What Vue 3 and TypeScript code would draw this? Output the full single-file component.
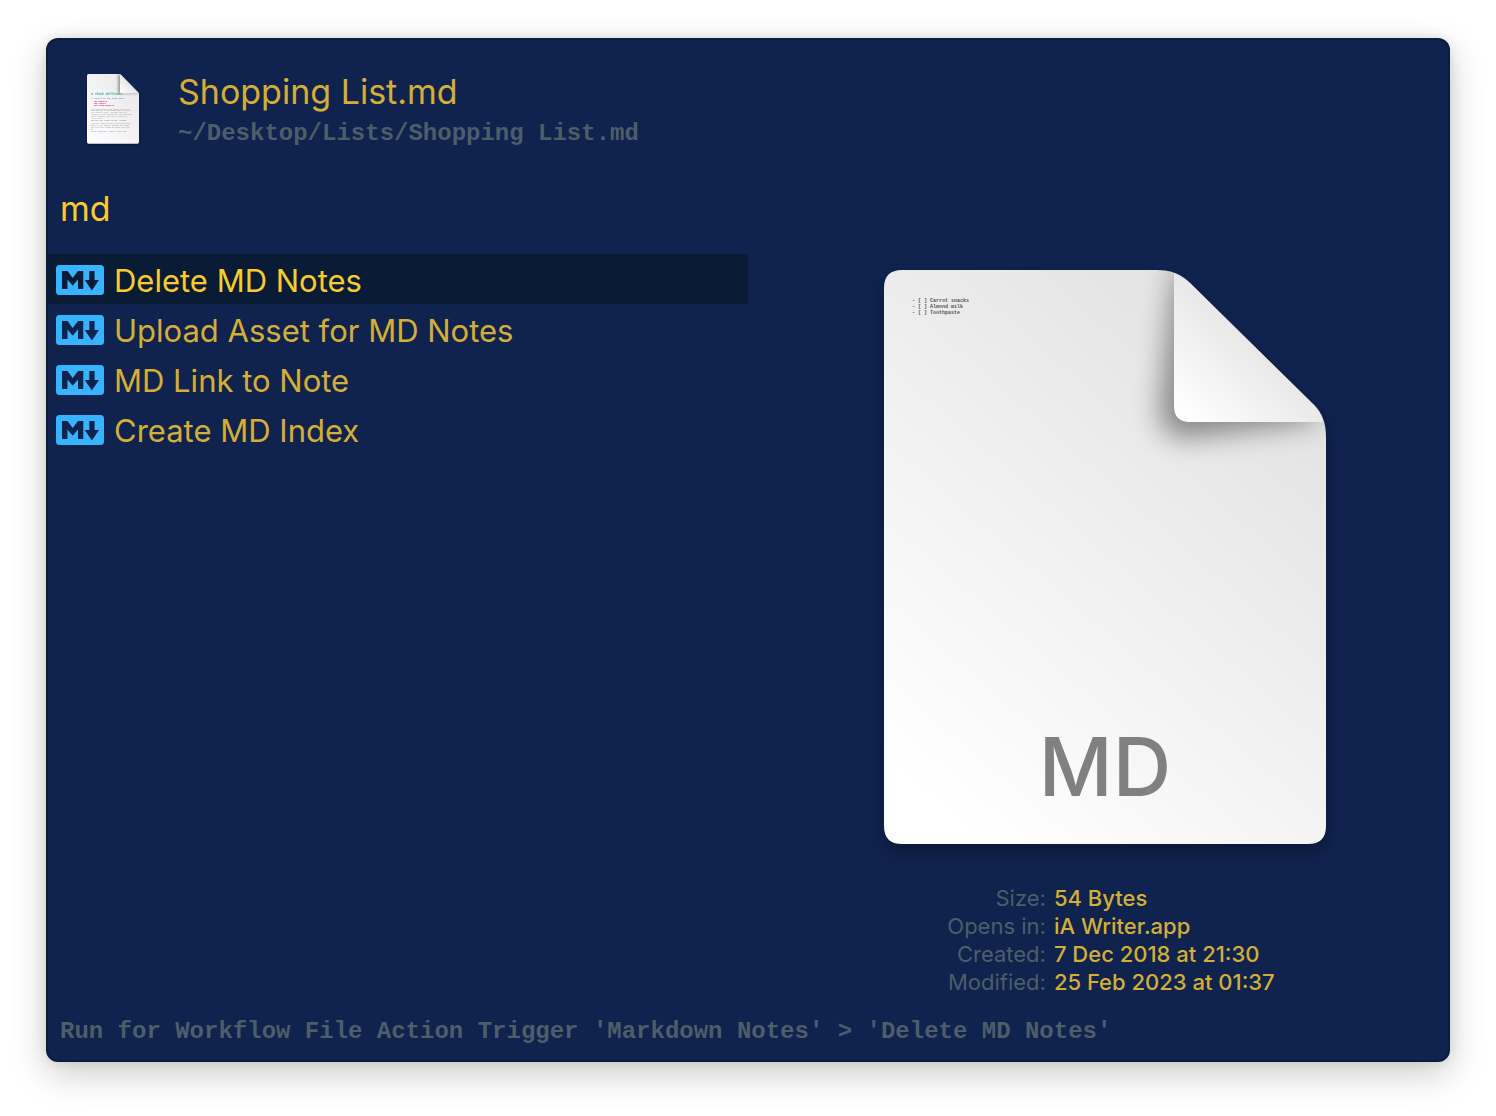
<script setup lang="ts">
import { ref } from 'vue'

interface Detail {
  label: string
  value: string
}

const query = ref('md')
const selected = ref(0)

const actions: string[] = [
  'Delete MD Notes',
  'Upload Asset for MD Notes',
  'MD Link to Note',
  'Create MD Index',
]

const details: Detail[] = [
  { label: 'Size:', value: '54 Bytes' },
  { label: 'Opens in:', value: 'iA Writer.app' },
  { label: 'Created:', value: '7 Dec 2018 at 21:30' },
  { label: 'Modified:', value: '25 Feb 2023 at 01:37' },
]
</script>

<template>
  <main class="window">
    <header class="file">
      <svg class="file-icon" viewBox="0 0 156 210" aria-hidden="true">
        <defs>
          <linearGradient id="mini-page" x1="0" y1="1" x2="1" y2="0">
            <stop offset="0" stop-color="#ffffff" />
            <stop offset="1" stop-color="#e6e6e6" />
          </linearGradient>
          <linearGradient id="mini-fold" x1="0" y1="1" x2="0.6" y2="0.4">
            <stop offset="0" stop-color="#ffffff" />
            <stop offset="1" stop-color="#e2e2e2" />
          </linearGradient>
          <filter id="mini-blur" x="-50%" y="-50%" width="200%" height="200%">
            <feGaussianBlur stdDeviation="5" />
          </filter>
          <clipPath id="mini-clip">
            <path d="M5 0H96Q100 0 103 3L153 54Q156 57 156 61V204Q156 209 151 209H5Q0 209 0 204V5Q0 0 5 0Z" />
          </clipPath>
        </defs>
        <path fill="url(#mini-page)" d="M5 0H96Q100 0 103 3L153 54Q156 57 156 61V204Q156 209 151 209H5Q0 209 0 204V5Q0 0 5 0Z" />
        <g class="mini-text">
          <text x="13" y="64" class="mini-h1"># Think different.</text>
          <text x="13" y="75" class="mini-h2">## Here's to the crazy ones.</text>
          <text x="13" y="85" class="mini-list">- The misfits</text>
          <text x="13" y="90" class="mini-list">- The rebels</text>
          <text x="13" y="95" class="mini-list">- The troublemakers</text>
          <text x="13" y="107">The round pegs in the square holes. The</text>
          <text x="13" y="112">ones who see things differently. They're</text>
          <text x="13" y="118">not fond of rules. And they have no</text>
          <text x="13" y="123">respect for the status quo. You can quote</text>
          <text x="13" y="129">them, disagree with them, glorify or</text>
          <text x="13" y="134">vilify them.</text>
          <text x="13" y="141" class="mini-quote">Because they change things. Forward.</text>
          <text x="13" y="151">And while some may see them as the crazy</text>
          <text x="13" y="156">ones, we see genius. Because the people</text>
          <text x="13" y="161">who are crazy enough to think they can</text>
          <text x="13" y="167">do.</text>
          <text x="13" y="175" class="mini-link">Think different - https://apple.com</text>
        </g>
        <g clip-path="url(#mini-clip)">
          <path d="M94 0V58H156L150 52L100 2Z" fill="#000" opacity="0.4" filter="url(#mini-blur)" />
        </g>
        <path fill="url(#mini-fold)" d="M99 1L155 58H104Q99 58 99 53Z" />
      </svg>
      <div class="file-text">
        <h1>Shopping List.md</h1>
        <p class="mono">~/Desktop/Lists/Shopping List.md</p>
      </div>
    </header>

    <input v-model="query" class="search" type="text" aria-label="Search actions" spellcheck="false" />

    <div class="content">
      <ul class="actions">
        <li v-for="(action, i) in actions" :key="action">
          <button type="button" :class="{ selected: i === selected }" @click="selected = i">
            <svg class="badge" viewBox="0 0 48 30" aria-hidden="true">
              <path
                fill="#38b4ff"
                fill-rule="evenodd"
                d="M3.500 0H44.500Q48 0 48 3.500V26.500Q48 30 44.500 30H3.500Q0 30 0 26.500V3.500Q0 0 3.500 0Z
                   M6 6V24H11.500V14.500L16.700 20.700L22 14.500V24H27.300V6H22L16.700 13L11.500 6Z
                   M33.300 6V15H28.700L35.900 25.500L43 15H38.600V6Z"
              />
            </svg>
            <span>{{ action }}</span>
          </button>
        </li>
      </ul>

      <section class="preview" aria-label="File preview">
        <svg class="page" viewBox="0 0 442 574" role="img" aria-label="MD document">
          <defs>
            <linearGradient id="page-fill" gradientUnits="userSpaceOnUse" x1="60" y1="540" x2="390" y2="160">
              <stop offset="0" stop-color="#ffffff" />
              <stop offset="0.55" stop-color="#f1f1f1" />
              <stop offset="1" stop-color="#e5e5e5" />
            </linearGradient>
            <linearGradient id="fold-fill" gradientUnits="userSpaceOnUse" x1="300" y1="148" x2="366" y2="76">
              <stop offset="0" stop-color="#ffffff" />
              <stop offset="1" stop-color="#e9e9e9" />
            </linearGradient>
            <filter id="fold-blur" x="-50%" y="-50%" width="200%" height="200%">
              <feGaussianBlur stdDeviation="14" />
            </filter>
            <clipPath id="page-clip">
              <path d="M18 0H272C288 0 297 4 306 13L430 135C438 143 442 152 442 168V556Q442 574 424 574H18Q0 574 0 556V18Q0 0 18 0Z" />
            </clipPath>
          </defs>
          <path
            class="sheet"
            fill="url(#page-fill)"
            d="M18 0H272C288 0 297 4 306 13L430 135C438 143 442 152 442 168V556Q442 574 424 574H18Q0 574 0 556V18Q0 0 18 0Z"
          />
          <g clip-path="url(#page-clip)">
            <path d="M292 -10L276 140Q276 168 302 168L440 150Z" fill="#000" opacity="0.42" filter="url(#fold-blur)" />
          </g>
          <path fill="url(#fold-fill)" d="M290 3Q298 6 306 13L430 135Q437 142 439 152H306Q290 152 290 136Z" />
          <g class="snippet">
            <text x="28" y="32">- [ ] Carrot snacks</text>
            <text x="28" y="38">- [ ] Almond milk</text>
            <text x="28" y="44">- [ ] Toothpaste</text>
          </g>
          <text class="kind" x="221" y="526" text-anchor="middle">MD</text>
        </svg>

        <dl class="details">
          <template v-for="d in details" :key="d.label">
            <dt>{{ d.label }}</dt>
            <dd>{{ d.value }}</dd>
          </template>
        </dl>
      </section>
    </div>

    <footer class="mono">Run for Workflow File Action Trigger 'Markdown Notes' &gt; 'Delete MD Notes'</footer>
  </main>
</template>

<style>
body {
  background: #ffffff;
}
</style>

<style scoped>
.window {
  box-sizing: border-box;
  display: flex;
  flex-direction: column;
  min-height: calc(100vh - 92px);
  margin: 38px 46px 54px;
  border: 2px solid #0a1d3c;
  border-radius: 12px;
  background: #10224e;
  box-shadow: 0 12px 36px rgba(0, 0, 0, 0.2), 0 0 12px rgba(0, 0, 0, 0.1);
  color: #d4af37;
  font-family: Inter, "Liberation Sans", sans-serif;
}

.mono {
  margin: 0;
  color: #4b5e69;
  font-family: "Courier New", "Liberation Mono", monospace;
  font-size: 24px;
  font-weight: 700;
  line-height: 28px;
}

.file {
  display: flex;
  gap: 39px;
  padding: 30px 39px 0;
}

.file-icon {
  width: 52px;
  height: 70px;
  margin-top: 4px;
  filter: drop-shadow(0 1px 1px rgba(0, 0, 0, 0.4));
}

.file-text {
  display: flex;
  flex-direction: column;
  gap: 6px;
}

.mini-text {
  fill: #8a8a8a;
  font-family: "Liberation Mono", monospace;
  font-size: 5px;
}

.mini-h1 {
  fill: #35a7a4;
  font-size: 9px;
  font-weight: 700;
}

.mini-h2 {
  fill: #4a90d9;
  font-size: 6px;
  font-weight: 700;
}

.mini-list {
  fill: #e0206c;
  font-size: 6px;
  font-weight: 700;
}

.mini-quote {
  fill: #7a5fc0;
}

.mini-link {
  fill: #5c86b5;
}

h1 {
  margin: 0;
  font-size: 34px;
  font-weight: 400;
  line-height: 44px;
}

.search {
  box-sizing: border-box;
  width: 100%;
  height: 52px;
  margin: 34px 0 20px;
  padding: 0 12px;
  border: 0;
  outline: 0;
  background: transparent;
  color: #f9cc2c;
  font: inherit;
  font-size: 34px;
}

.content {
  display: grid;
  flex: 1;
  grid-template-columns: 1fr 1fr;
}

.actions {
  margin: 0;
  padding: 0;
  list-style: none;
}

.actions button {
  display: flex;
  align-items: center;
  gap: 10px;
  width: 100%;
  height: 50px;
  padding: 2px 8px 0;
  border: 0;
  background: transparent;
  color: inherit;
  font: inherit;
  font-size: 31px;
  text-align: left;
}

.actions button.selected {
  background: #091b35;
  color: #f9cc2c;
}

.badge {
  width: 48px;
  height: 30px;
}

.preview {
  display: flex;
  flex-direction: column;
  align-items: center;
  padding: 16px 0 0 14px;
}

.page {
  width: 442px;
  max-width: 90%;
  overflow: visible;
}

.sheet {
  filter: drop-shadow(0 8px 8px rgba(0, 0, 0, 0.3));
}

.snippet {
  fill: #555555;
  font-family: "Liberation Mono", monospace;
  font-size: 5px;
  font-weight: 700;
}

.kind {
  fill: #808080;
  font-size: 81px;
  font-weight: 500;
}

.details {
  display: grid;
  grid-template-columns: auto auto;
  column-gap: 8px;
  margin: 40px 0 16px;
  padding-left: 12px;
  font-size: 22px;
  line-height: 28px;
}

dt {
  color: #4b5e69;
  text-align: right;
}

dd {
  margin: 0;
  font-weight: 500;
}

footer {
  padding: 0 12px 14px;
}
</style>
